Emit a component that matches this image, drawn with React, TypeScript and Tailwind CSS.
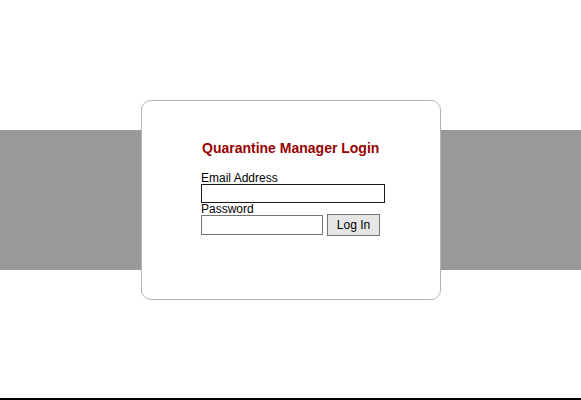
import React from "react";

export default function App() {
  return (
    <div className="w-[581px] h-[400px] bg-white flex flex-col font-['Liberation_Sans',Arial,sans-serif] text-black">
      <div className="h-[130px] shrink-0" />
      <div className="h-[140px] shrink-0 bg-[#999999] flex items-center pl-[141px]">
        <div className="w-[300px] h-[200px] shrink-0 bg-white border border-[#b5b5b5] rounded-[10px] pl-[59px] pt-[39px] flex flex-col">
          <h1 className="text-[14px] leading-[16px] font-bold text-[#990000] pl-[1px]">Quarantine Manager Login</h1>
          <label className="mt-[16px] text-[12px] leading-[12px]">Email Address</label>
          <input type="text" className="w-[184px] h-[19px] border border-[#1a1a1a] bg-white outline-none px-[2px] text-[12px]" />
          <label className="pt-[1px] text-[12px] leading-[10px]">Password</label>
          <div className="flex items-center gap-[4px] h-[22px]">
            <input type="password" className="w-[122px] h-[20px] border border-[#767676] bg-white outline-none px-[2px] text-[12px]" />
            <button className="w-[53px] h-[22px] border border-[#767676] bg-[#e6e6e6] text-[12px] leading-none text-black">Log In</button>
          </div>
        </div>
      </div>
      <div className="flex-1" />
      <div className="h-[2px] shrink-0 bg-black" />
    </div>
  );
}
